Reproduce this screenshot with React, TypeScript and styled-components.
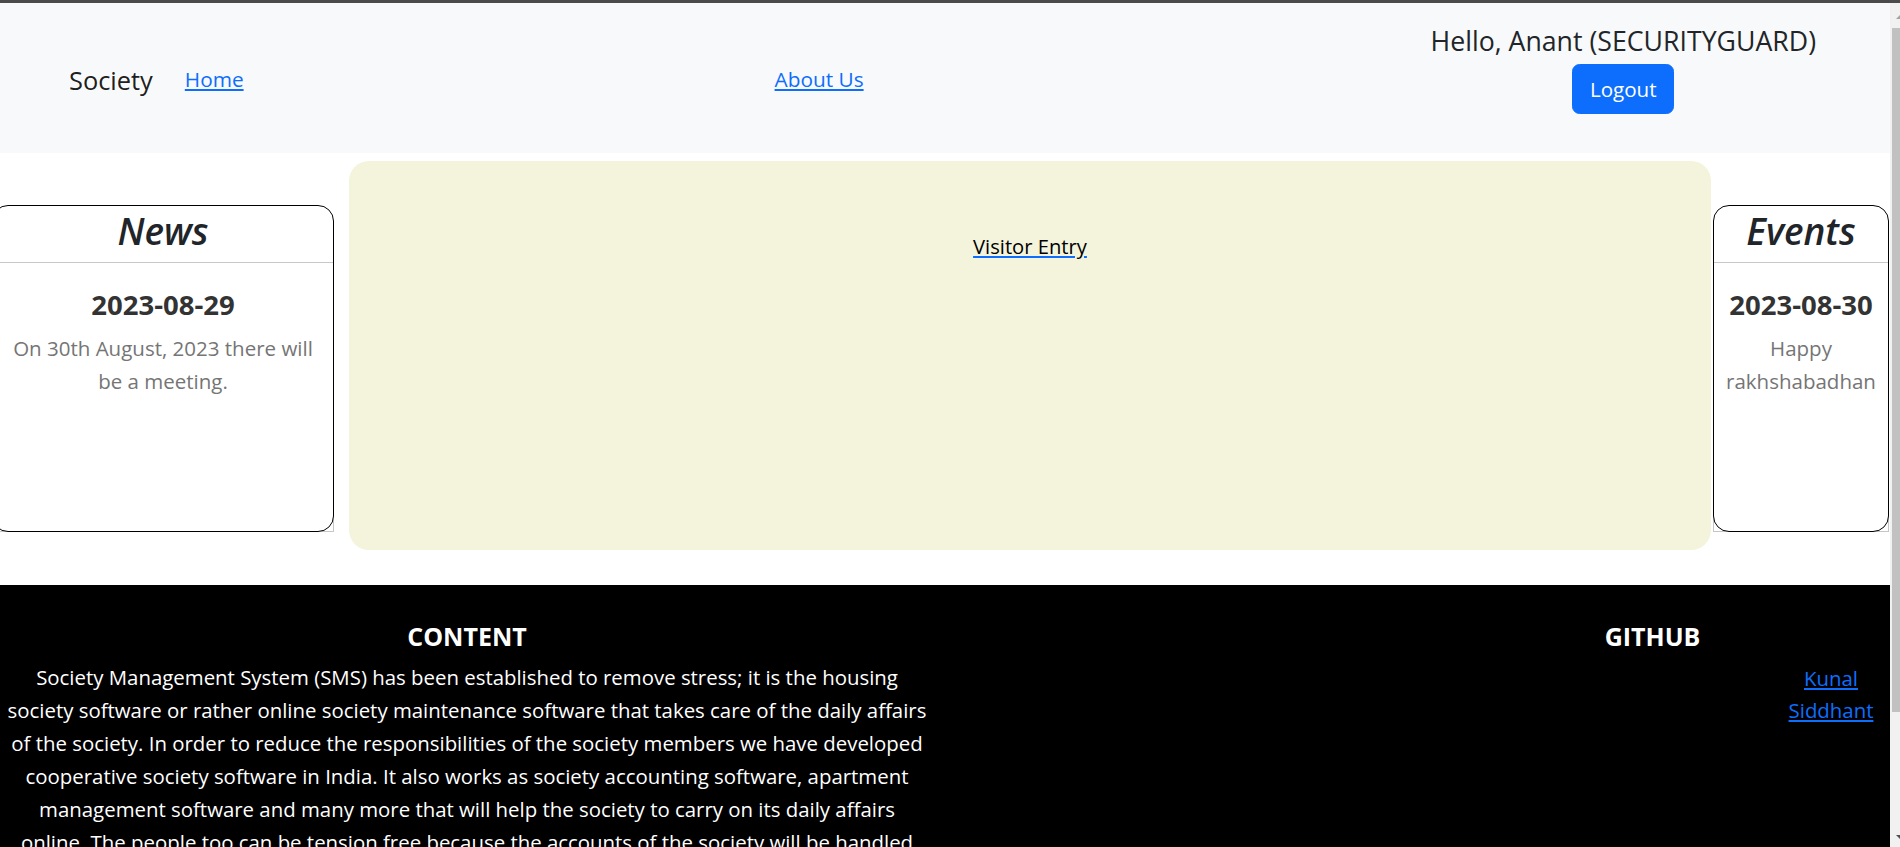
import React from "react";
import styled, { createGlobalStyle } from "styled-components";

const GlobalStyle = createGlobalStyle`
  html, body { margin: 0; padding: 0; }
  body {
    font-family: "Open Sans", "Noto Sans", sans-serif;
    font-size: 20.6px;
    color: #212529;
    background: #ffffff;
  }
  a { color: #0d6efd; text-decoration: underline; }
`;

const WindowEdge = styled.div`
  height: 3px;
  background: #4b4b4b;
`;

const Page = styled.div`
  width: calc(100% - 10px);
`;

const ScrollRail = styled.div`
  position: fixed;
  top: 3px;
  right: 0;
  bottom: 0;
  width: 10px;
  display: flex;
  flex-direction: column;
  align-items: flex-end;
  background: #f1f1f1;
`;

const RailArrow = styled.div<{ $down?: boolean }>`
  flex: none;
  height: 25px;
  width: 10px;
  display: flex;
  justify-content: flex-end;
  align-items: ${(p) => (p.$down ? "flex-end" : "flex-start")};
  padding: ${(p) => (p.$down ? "0 0 8px" : "12px 0 0")};
  box-sizing: border-box;

  &::before {
    content: "";
    width: 0;
    height: 0;
    border-left: 4px solid transparent;
    border-right: 0 solid transparent;
    ${(p) => (p.$down ? "border-top: 4px solid #505050;" : "border-bottom: 4px solid #a3a3a3;")}
  }
`;

const RailThumb = styled.div`
  flex: none;
  width: 8px;
  height: 684px;
  background: #c1c1c1;
`;

const RailRest = styled.div`
  flex: 1;
`;

const NavBar = styled.nav`
  display: flex;
  align-items: center;
  box-sizing: border-box;
  height: 150px;
  padding: 4px 74px 0 69px;
  background: #f8f9fa;
`;

const Brand = styled.a`
  font-size: 25.4px;
  line-height: 1.5;
  color: rgba(0, 0, 0, 0.9);
  text-decoration: none;
`;

const NavLink = styled.a<{ $offset: number }>`
  margin-left: ${(p) => p.$offset}px;
  font-size: 20.8px;
  line-height: 1.5;
`;

const UserBlock = styled.div`
  margin-left: auto;
  align-self: flex-start;
  margin-top: 18px;
  display: flex;
  flex-direction: column;
  align-items: center;
`;

const Greeting = styled.h5`
  margin: 0 0 7px;
  font-size: 26.7px;
  font-weight: 500;
  line-height: 32px;
  color: #212529;
`;

const LogoutButton = styled.button`
  width: 102px;
  height: 50px;
  padding: 0;
  border: 1px solid #0d6efd;
  border-radius: 7.5px;
  background: #0d6efd;
  color: #ffffff;
  font-family: inherit;
  font-size: 20.6px;
  cursor: pointer;
`;

const Main = styled.main`
  display: flex;
  align-items: flex-start;
  padding: 8px 1px 35px 0;
`;

const InfoCard = styled.section<{ $width: number; $offset: number }>`
  position: relative;
  box-sizing: border-box;
  flex: none;
  width: ${(p) => p.$width}px;
  height: 327px;
  margin: 44px 0 0 ${(p) => p.$offset}px;
  border: 1px solid #000000;
  border-radius: 16px;
  background: #ffffff;
  text-align: center;

  &::after {
    content: "";
    position: absolute;
    left: -1px;
    right: -1px;
    bottom: -1px;
    height: 22px;
    border: 1px solid #c6c6c6;
    border-top: none;
    z-index: -1;
  }
`;

const CardTitle = styled.h2`
  margin: 0;
  padding: 4px 0 10px;
  border-bottom: 1px solid #c8c8c8;
  font-size: 37px;
  font-style: italic;
  font-weight: 600;
  line-height: 42px;
  color: #212529;
`;

const CardBody = styled.div`
  padding: 26px 10px 0;
`;

const ItemDate = styled.h5`
  margin: 0 0 11px;
  font-size: 27.5px;
  font-weight: 700;
  line-height: 32.4px;
  color: #333333;
`;

const ItemText = styled.p`
  margin: 0;
  font-size: 20.5px;
  line-height: 33px;
  color: #757575;
`;

const Workspace = styled.div`
  flex: 1;
  height: 389px;
  margin-left: 15px;
  box-sizing: border-box;
  padding-top: 70px;
  border-radius: 20px;
  background: #f4f4dc;
  text-align: center;
`;

const VisitorLink = styled.a`
  font-size: 20.2px;
  line-height: 31px;
  color: #000000;
  text-decoration-color: #0d6efd;
`;

const Footer = styled.footer`
  display: flex;
  align-items: flex-start;
  box-sizing: border-box;
  min-height: 422px;
  padding-top: 36px;
  background: #000000;
  color: #ffffff;
`;

const FooterContent = styled.div`
  box-sizing: border-box;
  width: 934px;
  padding: 0 6.5px;
  text-align: center;
`;

const FooterHeading = styled.h5<{ $gap: number }>`
  margin: 0 0 ${(p) => p.$gap}px;
  font-size: 25px;
  font-weight: 700;
  line-height: 30px;
  text-align: center;
`;

const FooterText = styled.p`
  margin: 0;
  font-size: 20.4px;
  line-height: 33px;
`;

const FooterLinksCol = styled.div`
  margin-left: auto;
  width: 475px;
  display: flex;
  flex-direction: column;
`;

const LinkList = styled.ul`
  align-self: flex-end;
  width: 100px;
  margin: 0 9px 0 0;
  padding: 0;
  list-style: none;
  display: flex;
  flex-direction: column;
  align-items: center;
`;

const LinkItem = styled.li`
  font-size: 20.4px;
  line-height: 32.4px;
`;

type Item = { date: string; text: string };

const news: Item[] = [{ date: "2023-08-29", text: "On 30th August, 2023 there will be a meeting." }];
const events: Item[] = [{ date: "2023-08-30", text: "Happy rakhshabadhan" }];

function Board({ title, items, width, offset }: { title: string; items: Item[]; width: number; offset: number }) {
  return (
    <InfoCard $width={width} $offset={offset}>
      <CardTitle>{title}</CardTitle>
      <CardBody>
        {items.map((it) => (
          <div key={it.date}>
            <ItemDate>{it.date}</ItemDate>
            <ItemText>{it.text}</ItemText>
          </div>
        ))}
      </CardBody>
    </InfoCard>
  );
}

export default function App() {
  return (
    <>
      <GlobalStyle />
      <WindowEdge />
      <Page>
        <NavBar>
          <Brand href="#">Society</Brand>
          <NavLink $offset={32} href="#">Home</NavLink>
          <NavLink $offset={531} href="#">About Us</NavLink>
          <UserBlock>
            <Greeting>Hello, Anant (SECURITYGUARD)</Greeting>
            <LogoutButton type="button">Logout</LogoutButton>
          </UserBlock>
        </NavBar>
        <Main>
          <Board title="News" items={news} width={342} offset={-8} />
          <Workspace>
            <VisitorLink href="#">Visitor Entry</VisitorLink>
          </Workspace>
          <Board title="Events" items={events} width={176} offset={2} />
        </Main>
        <Footer>
          <FooterContent>
            <FooterHeading $gap={10}>CONTENT</FooterHeading>
            <FooterText>
              Society Management System (SMS) has been established to remove stress; it is the housing society
              software or rather online society maintenance software that takes care of the daily affairs of the
              society. In order to reduce the responsibilities of the society members we have developed cooperative
              society software in India. It also works as society accounting software, apartment management software
              and many more that will help the society to carry on its daily affairs online. The people too can be
              tension free because the accounts of the society will be handled transparently.
            </FooterText>
          </FooterContent>
          <FooterLinksCol>
            <FooterHeading $gap={11}>GITHUB</FooterHeading>
            <LinkList>
              <LinkItem><a href="#">Kunal</a></LinkItem>
              <LinkItem><a href="#">Siddhant</a></LinkItem>
            </LinkList>
          </FooterLinksCol>
        </Footer>
      </Page>
      <ScrollRail aria-hidden="true">
        <RailArrow />
        <RailThumb />
        <RailRest />
        <RailArrow $down />
      </ScrollRail>
    </>
  );
}
